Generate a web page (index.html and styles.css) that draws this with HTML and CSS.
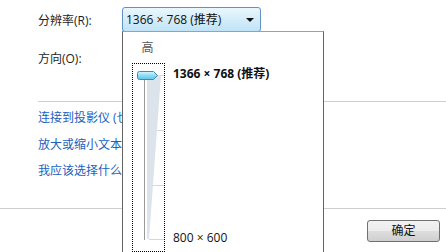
FILE: index.html
```html
<!DOCTYPE html>
<html lang="zh-CN">
  <head>
    <meta charset="UTF-8" />
    <meta name="viewport" content="width=device-width, initial-scale=1.0" />
    <title>屏幕分辨率</title>
    <link rel="stylesheet" href="styles.css">
  </head>
  <body>
    <div class="page">
      <div class="settings">
        <div class="row first">
          <span class="label">分辨率(R):</span>
          <div class="combo">
            <span>1366 × 768 (推荐)</span>
            <span class="arrow"></span>
          </div>
        </div>
        <div class="row second">
          <span class="label">方向(O):</span>
        </div>
        <div class="separator"></div>
        <div class="links">
          <a href="#">连接到投影仪 (也可以按住 Windows 徽标键并点击 P)</a>
          <a href="#">放大或缩小文本和其他项目</a>
          <a href="#">我应该选择什么显示器设置?</a>
        </div>
      </div>
      <div class="footer">
        <button class="ok_button">确定</button>
      </div>

      <!-- resolution dropdown -->
      <div class="dropdown">
        <div class="high">高</div>
        <div class="slider_area">
          <div class="slider">
            <svg width="31" height="187" viewBox="0 0 31 187">
              <polygon points="14,11 28,11 16,175 14,175" fill="#dde3ea" />
              <line x1="28" y1="11.5" x2="31" y2="11.5" stroke="#d4d8dc" />
              <line x1="24" y1="66.5" x2="31" y2="66.5" stroke="#d4d8dc" />
              <line x1="19" y1="121.5" x2="31" y2="121.5" stroke="#d4d8dc" />
              <line x1="16" y1="175.5" x2="31" y2="175.5" stroke="#d4d8dc" />
              <line x1="11.5" y1="16" x2="11.5" y2="176" stroke="#9a9a9a" />
              <defs>
                <linearGradient id="thumb" x1="0" y1="0" x2="0" y2="1">
                  <stop offset="0" stop-color="#d8f6fe" />
                  <stop offset="0.5" stop-color="#8ddcf6" />
                  <stop offset="1" stop-color="#5cc4ea" />
                </linearGradient>
              </defs>
              <path d="M6.5 7.5 H20.5 L24.5 11.5 L20.5 15.5 H6.5 Q4.5 15.5 4.5 13.5 V9.5 Q4.5 7.5 6.5 7.5 Z"
                    fill="url(#thumb)" stroke="#3a8db5" />
            </svg>
          </div>
          <div class="values">
            <span class="value current">1366 × 768 (推荐)</span>
            <span class="value">800 × 600</span>
          </div>
        </div>
      </div>
    </div>
  </body>
</html>
```

FILE: styles.css
```css
* {
  box-sizing: border-box;
}
body {
  margin: 0;
  background: #ffffff;
  font-family: "Open Sans", "Noto Sans CJK SC", sans-serif;
  font-size: 12px;
  color: #1e1e1e;
}
.page {
  position: relative;
  width: 446px;
  height: 252px;
  overflow: hidden;
}
.settings {
  padding-left: 38px;
  height: 208px;
}
.row {
  display: flex;
  align-items: center;
}
.row.first {
  padding-top: 7px;
}
.row.second {
  margin-top: 16px;
  height: 20px;
}
.label {
  width: 84px;
}
.combo {
  display: flex;
  align-items: center;
  justify-content: space-between;
  width: 139px;
  height: 25px;
  padding: 0 6px 0 3px;
  border: 1px solid #5f93c6;
  border-radius: 3px;
  background: linear-gradient(#eaf6fd, #d5edfa 50%, #bfe3f7);
  color: #111;
  line-height: 16px;
}
.arrow {
  width: 0;
  height: 0;
  border-left: 4px solid transparent;
  border-right: 4px solid transparent;
  border-top: 4px solid #111;
}
.separator {
  margin-top: 33px;
  height: 1px;
  background: #cfcfcf;
}
.links {
  display: flex;
  flex-direction: column;
  padding-top: 3px;
}
.links a {
  line-height: 26.5px;
  color: #2060c0;
  text-decoration: none;
  white-space: nowrap;
}
.footer {
  display: flex;
  justify-content: flex-end;
  border-top: 1px solid #cfcfcf;
  padding: 11px 6px 0 0;
}
.ok_button {
  width: 73px;
  height: 22px;
  padding: 0;
  font-family: inherit;
  font-size: 12px;
  line-height: 16px;
  color: #111;
  border: 1px solid #707070;
  border-radius: 3px;
  background: linear-gradient(#f2f2f2, #ebebeb 50%, #dddddd 51%, #cfcfcf);
}
.dropdown {
  position: absolute;
  left: 122px;
  top: 31px;
  width: 202px;
  height: 240px;
  background: #ffffff;
  border: 1px solid #646464;
  border-top-color: #a0a0a0;
  padding: 8px 0 0 9px;
}
.high {
  width: 31px;
  text-align: center;
  line-height: 16px;
  color: #555;
}
.slider_area {
  display: flex;
  margin-top: 7px;
}
.slider {
  width: 33px;
  height: 189px;
  border: 1px dotted #000;
}
.slider svg {
  display: block;
}
.values {
  display: flex;
  flex-direction: column;
  justify-content: space-between;
  padding: 3px 0 4px 8px;
  height: 187px;
}
.value {
  line-height: 16px;
  white-space: nowrap;
  color: #111;
}
.value.current {
  font-weight: bold;
}
```
